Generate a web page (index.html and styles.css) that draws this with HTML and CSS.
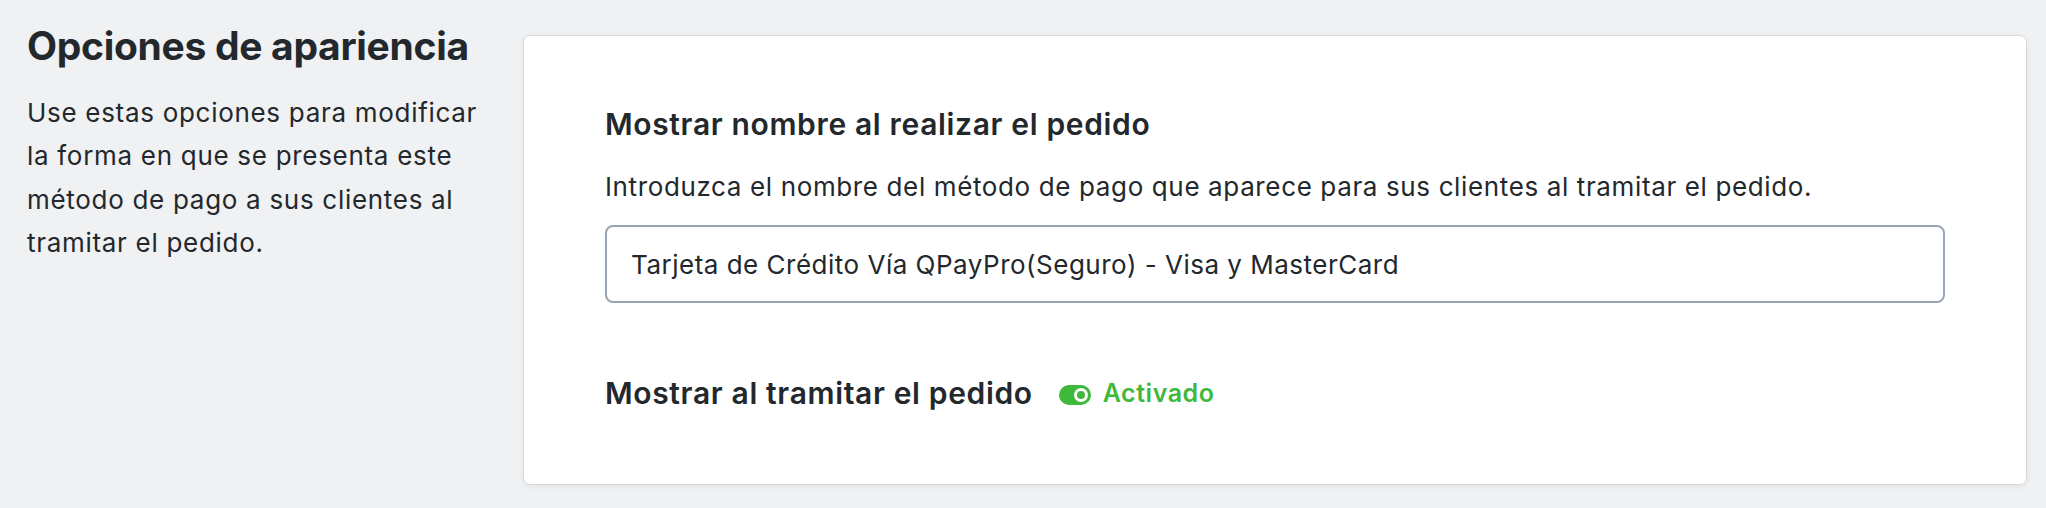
FILE: index.html
```html
<!DOCTYPE html>
<html lang="es">
<head>
    <meta charset="UTF-8">
    <meta name="viewport" content="width=device-width, initial-scale=1.0">
    <title>Opciones de apariencia</title>
    <link rel="stylesheet" href="styles.css">
</head>
<body>
    <div class="settings-section">
        <div class="section-info">
            <h2>Opciones de apariencia</h2>
            <p>Use estas opciones para modificar la forma en que se presenta este método de pago a sus clientes al tramitar el pedido.</p>
        </div>
        <div class="card">
            <div class="field">
                <label for="title">Mostrar nombre al realizar el pedido</label>
                <p class="help">Introduzca el nombre del método de pago que aparece para sus clientes al tramitar el pedido.</p>
                <input type="text" id="title" name="title" value="Tarjeta de Crédito Vía QPayPro(Seguro) - Visa y MasterCard">
            </div>
            <div class="toggle-row">
                <span class="toggle-label">Mostrar al tramitar el pedido</span>
                <span class="status">
                    <svg class="toggle-icon" width="32" height="20" viewBox="0 0 32 20">
                        <rect x="0" y="0" width="32" height="20" rx="10" fill="#3fb83c"/>
                        <circle cx="22" cy="10" r="5.5" fill="#3fb83c" stroke="#fff" stroke-width="3"/>
                    </svg>
                    Activado
                </span>
            </div>
        </div>
    </div>
</body>
</html>
```

FILE: styles.css
```css
body {
    margin: 0;
    padding: 0;
    background-color: #f0f1f3;
    color: #23282d;
    font-family: Inter, "Noto Sans", sans-serif;
}
.settings-section {
    display: flex;
    align-items: flex-start;
    padding: 23px 19px 26px 27px;
}
.section-info {
    width: 462px;
    flex-shrink: 0;
    margin-right: 34px;
}
.section-info h2 {
    margin: 0 0 21px;
    font-size: 39px;
    font-weight: 700;
    line-height: 1.2;
    letter-spacing: -0.3px;
    color: #23282d;
}
.section-info p {
    margin: 0;
    font-size: 26px;
    line-height: 43.5px;
    letter-spacing: 0.7px;
    color: #23282d;
}
.card {
    flex: 1;
    margin-top: 12px;
    background-color: white;
    border: 1px solid #d5dadf;
    border-radius: 7px;
    box-shadow: 0 2px 6px rgba(0,0,0,0.06);
    padding: 68px 81px 71px;
}
.field label {
    display: block;
    font-size: 30px;
    font-weight: 600;
    line-height: 40px;
    letter-spacing: 0.65px;
    margin-bottom: 24px;
}
.help {
    margin: 0 0 19px;
    font-size: 26px;
    line-height: 38px;
    letter-spacing: 0.63px;
}
input {
    display: block;
    width: 100%;
    height: 78px;
    box-sizing: border-box;
    padding: 0 24px;
    border: 2px solid #98a5b3;
    border-radius: 8px;
    font-family: Inter, "Noto Sans", sans-serif;
    font-size: 26px;
    letter-spacing: 0.5px;
    color: #23282d;
}
.toggle-row {
    display: flex;
    align-items: center;
    margin-top: 70px;
}
.toggle-label {
    font-size: 30px;
    font-weight: 600;
    line-height: 40px;
    letter-spacing: 0.65px;
}
.status {
    display: flex;
    align-items: center;
    margin-left: 26px;
    font-size: 25px;
    font-weight: 600;
    letter-spacing: 0.55px;
    color: #3fb83c;
}
.toggle-icon {
    margin: 3px 12px 0 0;
}
```
